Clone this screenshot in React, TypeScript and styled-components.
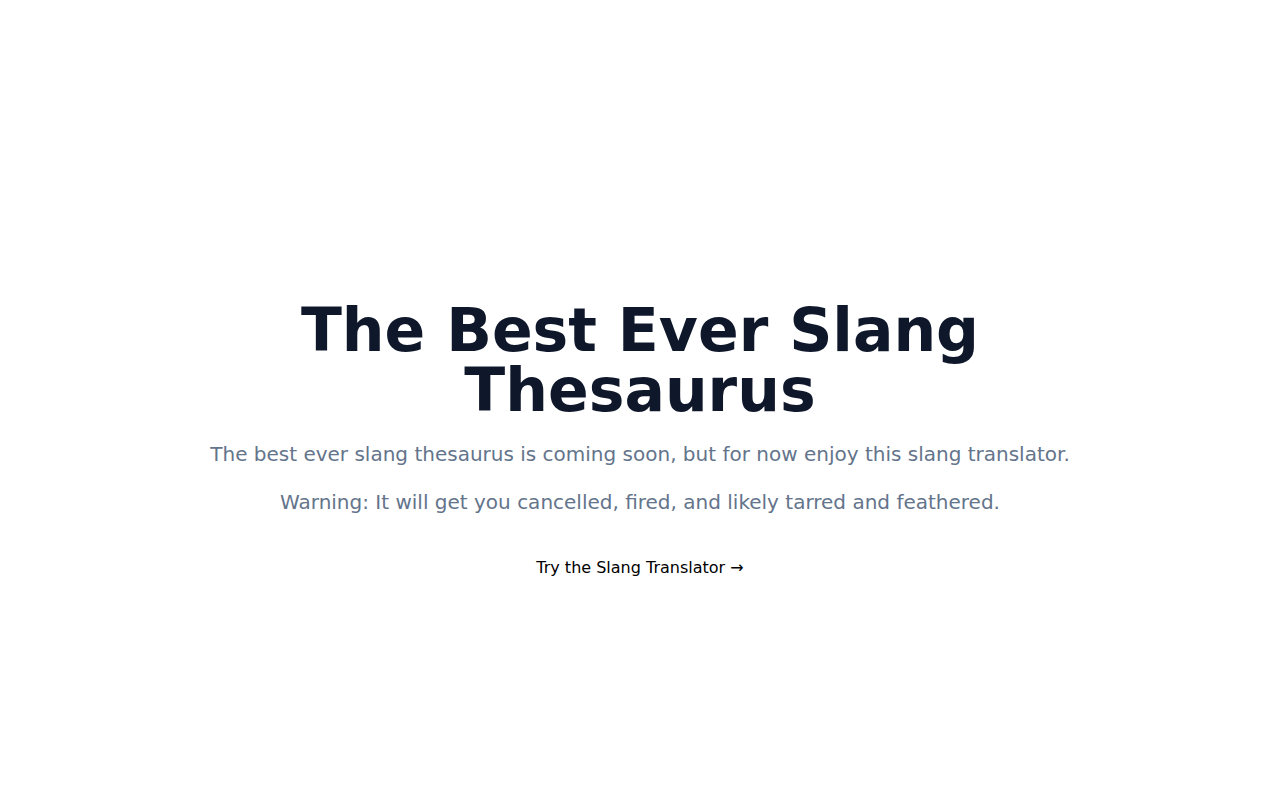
import React from "react";
import styled, { createGlobalStyle } from "styled-components";

const GlobalStyles = createGlobalStyle`
	html, body {
		margin: 0;
		padding: 0;
		background: #ffffff;
	}
	body {
		font-family: "DejaVu Sans", sans-serif;
	}
`;

const Page = styled.main`
	min-height: 800px;
	box-sizing: border-box;
	padding-top: 300px;
	display: flex;
	flex-direction: column;
	align-items: center;
	text-align: center;
`;

const Title = styled.h1`
	margin: 0;
	max-width: 720px;
	font-size: 60px;
	line-height: 60px;
	font-weight: 700;
	color: #0f172a;
`;

const Lead = styled.p`
	margin: 20px 0 0;
	font-size: 20px;
	line-height: 28px;
	color: #64748b;
`;

const Cta = styled.a`
	margin-top: 40px;
	font-size: 16px;
	line-height: 24px;
	color: #000000;
	text-decoration: none;
	cursor: pointer;
`;

function App() {
	return (
		<>
			<GlobalStyles />
			<Page>
				<Title>The Best Ever Slang Thesaurus</Title>
				<Lead>
					The best ever slang thesaurus is coming soon, but for now enjoy this slang translator.
				</Lead>
				<Lead>
					Warning: It will get you cancelled, fired, and likely tarred and feathered.
				</Lead>
				<Cta href="#">Try the Slang Translator →</Cta>
			</Page>
		</>
	);
}

export default App;
